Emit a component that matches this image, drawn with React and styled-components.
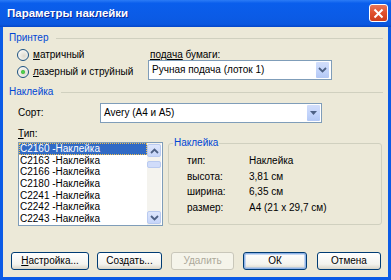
import React from 'react';
import styled, { createGlobalStyle } from 'styled-components';

const Global = createGlobalStyle`
  html, body { margin: 0; padding: 0; background: #ffffff; }
  body { font-family: "Liberation Sans", Arial, sans-serif; font-size: 10px; color: #000; }
  * { box-sizing: border-box; }
`;

const Window = styled.div`
  width: 391px;
  height: 280px;
  display: flex;
  flex-direction: column;
  background: #0B5BE6;
`;

const TitleBar = styled.div`
  height: 27px;
  flex: none;
  display: flex;
  align-items: flex-start;
  justify-content: space-between;
  padding: 0 3px 0 7px;
  background: linear-gradient(to bottom, #2B7BF6 0%, #0A5EEC 12%, #0B5BE6 60%, #0A58E0 90%, #0546C8 100%);
`;

const Title = styled.div`
  color: #fff;
  font-weight: bold;
  font-size: 11.5px;
  line-height: 27px;
  text-shadow: 1px 1px 0 #0A2A9A;
`;

const CloseBtn = styled.div`
  width: 19px;
  height: 18px;
  margin-top: 4px;
  border: 1px solid #fff;
  border-radius: 3px;
  background: linear-gradient(to bottom, #E9765A 0%, #E0502C 50%, #CC3D1C 100%);
  display: flex;
  align-items: center;
  justify-content: center;
`;

const Frame = styled.div`
  flex: 1;
  display: flex;
  flex-direction: column;
  border: 3px solid #0B5BE6;
  border-top: 0;
  background: #ECE9D8;
`;

const Body = styled.div`
  flex: 1;
  display: flex;
  flex-direction: column;
  padding: 5px 5px 7px 6px;
`;

const SectionHeader = styled.div`
  display: flex;
  align-items: center;
  height: 12px;
  line-height: 12px;
  color: #0046D5;
  margin-top: ${p => p.$mt || 0}px;
  &::after {
    content: '';
    flex: 1;
    height: 1px;
    margin-left: 8px;
    background: #D0D0BF;
  }
`;

const PrinterGrid = styled.div`
  display: grid;
  grid-template-columns: 131px 184px;
  grid-template-rows: 12px 20px;
  margin: 5px 0 0 8px;
`;

const RadioRow = styled.label`
  display: flex;
  align-items: center;
  gap: 4px;
  line-height: 12px;
  margin-top: ${p => p.$mt || 0}px;
`;

const RadioCircle = styled.span`
  width: 12px;
  height: 12px;
  border-radius: 50%;
  border: 1px solid #1C5180;
  background: radial-gradient(circle at 60% 60%, #DCD9CE 0%, #F4F3EE 60%, #ffffff 100%);
  display: flex;
  align-items: center;
  justify-content: center;
  &::after {
    content: '';
    display: ${p => (p.$checked ? 'block' : 'none')};
    width: 4px;
    height: 4px;
    border-radius: 50%;
    background: radial-gradient(circle, #5DE05A 0%, #21A121 100%);
  }
`;

const FieldLabel = styled.div`
  line-height: 12px;
  padding-left: 2px;
`;

const Select = styled.div`
  width: ${p => p.$w}px;
  height: 20px;
  margin-top: ${p => p.$mt || 0}px;
  border: 1px solid #7F9DB9;
  background: #fff;
  display: flex;
  align-items: center;
  justify-content: space-between;
  padding: 0 ${p => p.$pr || 2}px 0 3px;
  line-height: 12px;
`;

const DropBtn = styled.span`
  width: 13px;
  height: 16px;
  border-radius: 1px;
  background: linear-gradient(to bottom, #D2DEFB 0%, #C1D3FB 60%, #B3C8F5 100%);
  display: flex;
  align-items: center;
  justify-content: center;
`;

const SortRow = styled.div`
  display: flex;
  align-items: center;
  margin-top: 5px;
  padding-left: 9px;
`;

const RowLabel = styled.div`
  width: 82px;
  line-height: 12px;
`;

const TypeLabel = styled.div`
  margin-top: 6px;
  padding-left: 9px;
  line-height: 10px;
  height: 10px;
`;

const ListRow = styled.div`
  display: flex;
  align-items: flex-start;
  margin-top: 3px;
  padding-left: 9px;
`;

const ListBox = styled.div`
  width: 145px;
  height: 84px;
  border: 1px solid #7F9DB9;
  background: #fff;
  display: flex;
  padding: 0 1px 0 0;
`;

const Items = styled.div`
  flex: 1;
  overflow: hidden;
`;

const Item = styled.div`
  height: 11.7px;
  line-height: 11.7px;
  padding-left: 1px;
  white-space: nowrap;
  background: ${p => (p.$selected ? '#316AC5' : 'transparent')};
  color: ${p => (p.$selected ? '#fff' : '#000')};
  outline: ${p => (p.$selected ? '1px dotted #F0C050' : 'none')};
  outline-offset: -1px;
`;

const ScrollBar = styled.div`
  width: 14px;
  display: flex;
  flex-direction: column;
  background: #F4F3EE;
  padding: 1px 0 1px 0;
`;

const ScrollBtn = styled.div`
  height: 13px;
  border-radius: 2px;
  border: 1px solid #B9CAF0;
  background: linear-gradient(to bottom, #DDE6FC 0%, #C6D5F9 100%);
  display: flex;
  align-items: center;
  justify-content: center;
`;

const Track = styled.div`
  flex: 1;
  padding-top: 4px;
`;

const Thumb = styled.div`
  height: 7px;
  border-radius: 2px;
  border: 1px solid #B9CAF0;
  background: #D0DCFA;
`;

const Group = styled.fieldset`
  width: 214px;
  height: 87px;
  margin: -4px 0 0 5px;
  padding: 0;
  border: 1px solid #D0D0BF;
  border-radius: 3px;
  min-width: 0;
`;

const Legend = styled.legend`
  margin-left: 4px;
  padding: 0 1px;
  color: #0046D5;
  line-height: 10px;
`;

const InfoGrid = styled.div`
  display: grid;
  grid-template-columns: 62px auto;
  padding: 5px 0 0 18px;
  line-height: 15.5px;
`;

const Buttons = styled.div`
  margin-top: auto;
  display: flex;
  padding-left: 2px;
`;

const Button = styled.div`
  width: ${p => p.$w}px;
  height: 18px;
  margin-left: ${p => p.$ml || 0}px;
  border: 1px solid ${p => (p.$disabled ? '#C9C7BA' : '#003C74')};
  border-radius: 3px;
  background: ${p => (p.$disabled ? '#F5F4EA' : 'linear-gradient(to bottom, #FFFFFF 0%, #F3F3EE 70%, #D8D4C8 100%)')};
  color: ${p => (p.$disabled ? '#ACA899' : '#000')};
  box-shadow: ${p => (p.$default ? 'inset 0 0 0 1.5px #8FB3E8' : 'none')};
  display: flex;
  align-items: center;
  justify-content: center;
  line-height: 12px;
`;

const Chevron = ({ up }) => (
  <svg width="9" height="6" viewBox="0 0 9 6">
    <path
      d={up ? 'M1 5 L4.5 1.5 L8 5' : 'M1 1 L4.5 4.5 L8 1'}
      fill="none"
      stroke="#4D6185"
      strokeWidth="1.8"
    />
  </svg>
);

const Triangle = () => (
  <svg width="7" height="4" viewBox="0 0 7 4">
    <path d="M0 0 L7 0 L3.5 4 Z" fill="#4D6185" />
  </svg>
);

const XIcon = () => (
  <svg width="11" height="11" viewBox="0 0 11 11">
    <path d="M1.5 1.5 L9.5 9.5 M9.5 1.5 L1.5 9.5" stroke="#fff" strokeWidth="2" />
  </svg>
);

const items = [
  'C2160 -Наклейка',
  'C2163 -Наклейка',
  'C2166 -Наклейка',
  'C2180 -Наклейка',
  'C2241 -Наклейка',
  'C2242 -Наклейка',
  'C2243 -Наклейка',
];

const info = [
  ['тип:', 'Наклейка'],
  ['высота:', '3,81 см'],
  ['ширина:', '6,35 см'],
  ['размер:', 'A4 (21 x 29,7 см)'],
];

export default function App() {
  return (
    <>
      <Global />
      <Window>
        <TitleBar>
          <Title>Параметры наклейки</Title>
          <CloseBtn><XIcon /></CloseBtn>
        </TitleBar>
        <Frame>
          <Body>
            <SectionHeader>Принтер</SectionHeader>
            <PrinterGrid>
              <RadioRow>
                <RadioCircle />
                <span><u>м</u>атричный</span>
              </RadioRow>
              <FieldLabel><u>подача</u> бумаги:</FieldLabel>
              <RadioRow $mt={1}>
                <RadioCircle $checked />
                <span><u>л</u>азерный и струйный</span>
              </RadioRow>
              <Select $w={184} $mt={-1}>
                <span>Ручная подача (лоток 1)</span>
                <DropBtn><Chevron /></DropBtn>
              </Select>
            </PrinterGrid>

            <SectionHeader $mt={5}>Наклейка</SectionHeader>
            <SortRow>
              <RowLabel>Сорт:</RowLabel>
              <Select $w={222} $pr={1}>
                <span>Avery (A4 и A5)</span>
                <DropBtn><Triangle /></DropBtn>
              </Select>
            </SortRow>
            <TypeLabel><u>Т</u>ип:</TypeLabel>
            <ListRow>
              <ListBox>
                <Items>
                  {items.map((t, i) => (
                    <Item key={t} $selected={i === 0}>{t}</Item>
                  ))}
                </Items>
                <ScrollBar>
                  <ScrollBtn><Chevron up /></ScrollBtn>
                  <Track><Thumb /></Track>
                  <ScrollBtn><Chevron /></ScrollBtn>
                </ScrollBar>
              </ListBox>
              <Group>
                <Legend>Наклейка</Legend>
                <InfoGrid>
                  {info.map(([k, v]) => (
                    <React.Fragment key={k}>
                      <span>{k}</span>
                      <span>{v}</span>
                    </React.Fragment>
                  ))}
                </InfoGrid>
              </Group>
            </ListRow>

            <Buttons>
              <Button $w={78}><span><u>Н</u>астройка...</span></Button>
              <Button $w={65} $ml={8}><span>Соз<u>д</u>ать...</span></Button>
              <Button $w={63} $ml={9} $disabled>Удалить</Button>
              <Button $w={64} $ml={9} $default>ОК</Button>
              <Button $w={64} $ml={10}>Отмена</Button>
            </Buttons>
          </Body>
        </Frame>
      </Window>
    </>
  );
}
